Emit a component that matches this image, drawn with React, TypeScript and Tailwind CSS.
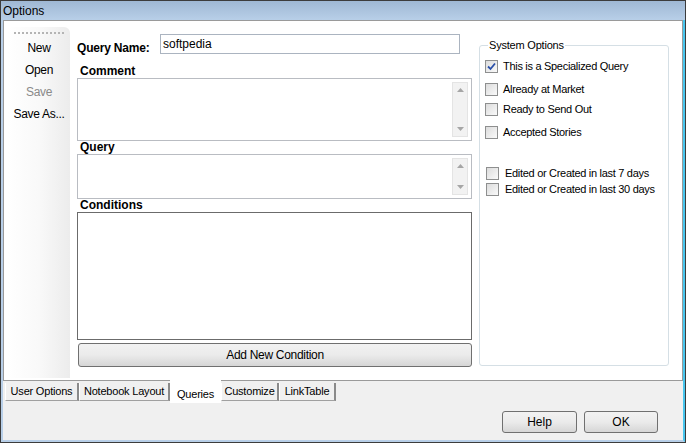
import React from "react";

const sideItems = [
  { label: "New", disabled: false },
  { label: "Open", disabled: false },
  { label: "Save", disabled: true },
  { label: "Save As...", disabled: false },
];

const systemOptions = [
  { label: "This is a Specialized Query", checked: true, gap: "mt-[1px]" },
  { label: "Already at Market", checked: false, gap: "mt-[10px]" },
  { label: "Ready to Send Out", checked: false, gap: "mt-[7px]" },
  { label: "Accepted Stories", checked: false, gap: "mt-[10px]" },
  { label: "Edited or Created in last 7 days", checked: false, gap: "mt-[28px]" },
  { label: "Edited or Created in last 30 days", checked: false, gap: "mt-[3px]" },
];

const tabs = [
  { label: "User Options", width: "w-[74px]" },
  { label: "Notebook Layout", width: "w-[91px]" },
  { label: "Queries", width: "w-[51px]" },
  { label: "Customize", width: "w-[58px]" },
  { label: "LinkTable", width: "w-[57px]" },
];

function CheckBox({ checked }: { checked: boolean }) {
  return (
    <div className="w-[13px] h-[13px] border border-[#8e8f8f] bg-gradient-to-br from-[#dcdcdc] to-[#fafafa] flex items-center justify-center shrink-0">
      {checked && (
        <svg width="9" height="9" viewBox="0 0 9 9">
          <path d="M1 4.5 L3.5 7 L8 1.5" fill="none" stroke="#2a4fa8" strokeWidth="1.8" />
        </svg>
      )}
    </div>
  );
}

function ScrollBox({ height }: { height: string }) {
  return (
    <div className={`w-[395px] ${height} border border-[#b9bcc2] bg-white flex justify-end p-[3px]`}>
      <div className="w-[16px] h-full bg-[#f2f2f2] border border-[#e4e4e4] flex flex-col justify-between items-center py-[5px]">
        <svg width="7" height="4" viewBox="0 0 7 4">
          <path d="M0 4 L3.5 0 L7 4 Z" fill="#a6a6a6" />
        </svg>
        <svg width="7" height="4" viewBox="0 0 7 4">
          <path d="M0 0 L3.5 4 L7 0 Z" fill="#a6a6a6" />
        </svg>
      </div>
    </div>
  );
}

function WinButton({ label, width }: { label: string; width: string }) {
  return (
    <button className={`${width} h-[22px] border border-[#707070] rounded-[3px] bg-gradient-to-b from-[#f2f2f2] via-[#ebebeb] to-[#d6d6d6] text-[12px] text-black leading-none`}>
      {label}
    </button>
  );
}

export default function App() {
  return (
    <div className="w-[686px] h-[443px] bg-[#f0f0f0] border border-[#3c3c3c] flex flex-col overflow-hidden text-black" style={{ fontFamily: '"Liberation Sans", Arial, sans-serif' }}>
      {/* barra de título */}
      <div className="h-[19px] shrink-0 bg-gradient-to-b from-[#9fb8d4] to-[#b8cfe8] flex items-center px-[2px] text-[12px]">
        Options
      </div>

      <div className="flex-1 flex flex-col border-l-[2px] border-r-[2px] border-b-[2px] border-l-[#b8cfe8] border-r-[#49c6ee] border-b-[#b8cfe8]">
        {/* painel principal */}
        <div className="h-[361px] w-[680px] bg-white border border-[#9a9a9a] flex">
          {/* barra lateral */}
          <div className="ml-[4px] mt-[6px] w-[62px] h-[351px] rounded-tr-[6px] bg-gradient-to-r from-white via-[#f9f9f9] to-[#ececec] flex flex-col items-center">
            <div className="mt-[5px] w-[50px] border-t-[2px] border-dotted border-[#b4b4b4]" />
            <div className="mt-[7px] flex flex-col items-center gap-[8px] text-[12px] tracking-[-0.3px]">
              {sideItems.map((item) => (
                <div key={item.label} className={`leading-[14px] ${item.disabled ? "text-[#8a8a8a]" : "text-black"}`}>
                  {item.label}
                </div>
              ))}
            </div>
          </div>

          {/* coluna central */}
          <div className="ml-[7px] w-[396px] flex flex-col pt-[13px]">
            <div className="flex items-end">
              <span className="font-bold text-[12px] leading-[14px] w-[83px] mb-[-1px] tracking-[-0.2px]">Query Name:</span>
              <div className="w-[300px] h-[20px] border border-[#abb4c0] flex items-center px-[2px] text-[12px]">softpedia</div>
            </div>
            <div className="mt-[10px] ml-[3px] font-bold text-[12px] leading-[14px]">Comment</div>
            <ScrollBox height="h-[63px]" />
            <div className="ml-[3px] font-bold text-[12px] leading-[13px]">Query</div>
            <ScrollBox height="h-[45px]" />
            <div className="ml-[3px] font-bold text-[12px] leading-[13px]">Conditions</div>
            <div className="w-[395px] h-[128px] border border-[#6b6b6b] bg-white" />
            <div className="mt-[2px] ml-[1px]">
              <button className="w-[394px] h-[24px] border border-[#707070] rounded-[3px] bg-gradient-to-b from-[#f2f2f2] via-[#ebebeb] to-[#d6d6d6] text-[12px] leading-none tracking-[-0.3px]">
                Add New Condition
              </button>
            </div>
          </div>

          {/* opções do sistema */}
          <div className="ml-[6px] mt-[24px] w-[190px] h-[321px] border border-[#d5dfe5] rounded-[3px] relative px-[5px]">
            <span className="absolute left-[8px] top-[-8px] bg-white px-[1px] text-[11px] leading-[14px] tracking-[-0.2px]">System Options</span>
            <div className="pt-[13px] flex flex-col text-[11px] tracking-[-0.3px]">
              {systemOptions.map((opt, idx) => (
                <div key={opt.label} className={`flex items-center whitespace-nowrap ${opt.gap} ${idx >= 4 ? "pl-[1px]" : ""}`}>
                  <CheckBox checked={opt.checked} />
                  <span className={`${idx >= 4 ? "ml-[6px]" : "ml-[5px]"} leading-[13px]`}>{opt.label}</span>
                </div>
              ))}
            </div>
          </div>
        </div>

        {/* abas e botões */}
        <div className="flex-1 flex flex-col">
          <div className="flex items-start ml-[2px] h-[22px]">
            {tabs.map((tab) => {
              const active = tab.label === "Queries";
              return active ? (
                <div key={tab.label} className={`${tab.width} h-[23px] mt-[-1px] bg-white flex items-end justify-center pb-[2px] text-[11px] leading-[13px] tracking-[-0.2px]`}>
                  {tab.label}
                </div>
              ) : (
                <div key={tab.label} className={`${tab.width} h-[18px] mt-[2px] border-l border-l-[#ffffff] border-r-[2px] border-r-[#8a8a8a] border-b border-b-[#a0a0a0] bg-[#f0f0f0] flex items-center justify-center text-[11px] leading-[13px] tracking-[-0.2px]`}>
                  {tab.label}
                </div>
              );
            })}
          </div>
          <div className="flex justify-end gap-[7px] pr-[25px] mt-[8px]">
            <WinButton label="Help" width="w-[75px]" />
            <WinButton label="OK" width="w-[74px]" />
          </div>
        </div>
      </div>
    </div>
  );
}
